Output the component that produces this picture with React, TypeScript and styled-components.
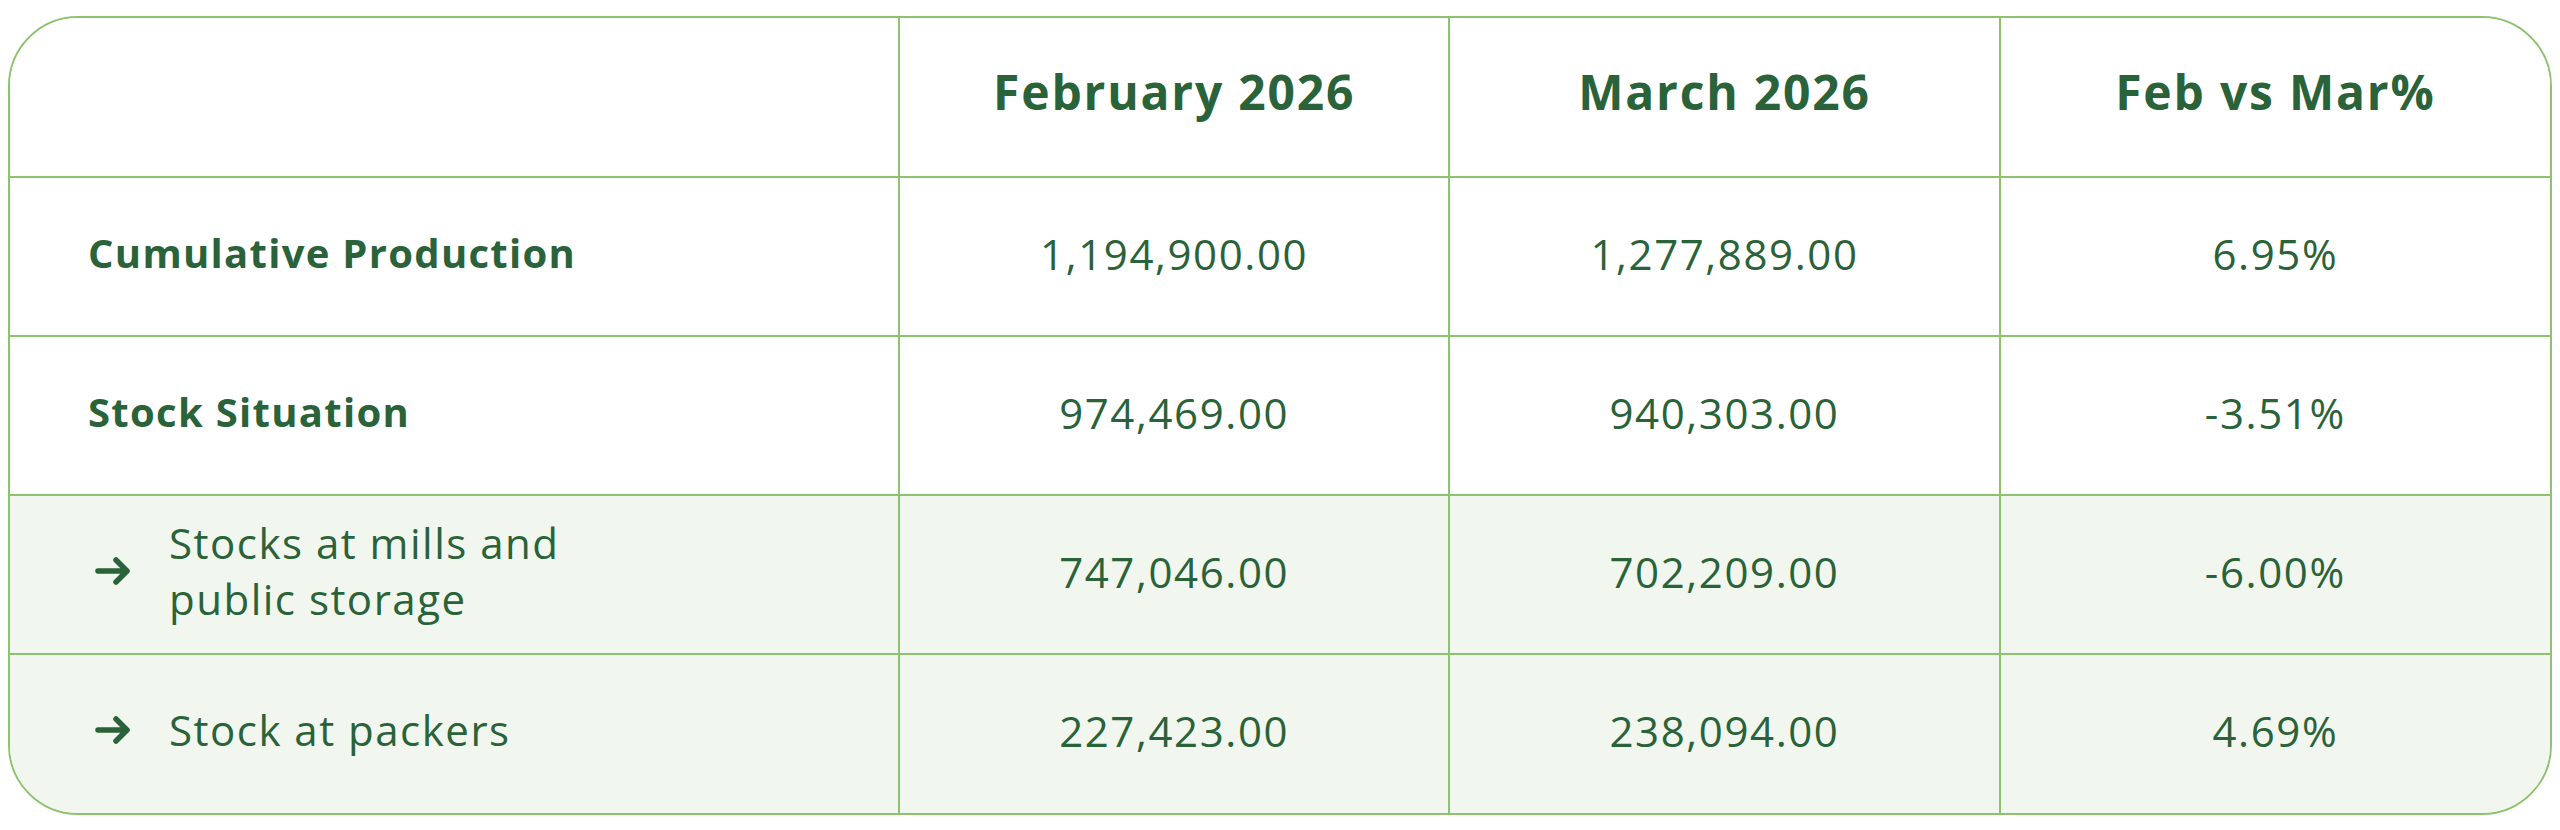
import React from 'react';
import styled, { createGlobalStyle } from 'styled-components';

const GlobalStyle = createGlobalStyle`
    body {
        margin: 0;
        background: #fff;
        font-family: 'Open Sans', 'Noto Sans', sans-serif;
    }
`;

const Page = styled.div`
    padding: 16px 8px 0 8px;
`;

const Frame = styled.div`
    border: 2px solid #8dc26f;
    border-radius: 70px;
    overflow: hidden;
`;

const Table = styled.table`
    width: 100%;
    border-collapse: collapse;
    table-layout: fixed;
    color: #2a6239;
`;

const Row = styled.tr<{ $tinted?: boolean; $last?: boolean }>`
    height: 159px;
    background: ${(p) => (p.$tinted ? '#f1f6ee' : '#fff')};
    border-bottom: ${(p) => (p.$last ? 'none' : '2px solid #8dc26f')};
`;

const HeadCell = styled.th`
    padding-bottom: 12px;
    font-size: 48px;
    font-weight: 700;
    letter-spacing: 1.8px;
    text-align: center;
    border-left: 2px solid #8dc26f;
    &:first-child {
        border-left: none;
    }
`;

const LabelCell = styled.td`
    padding: 0 0 8px 78px;
    font-size: 40px;
    font-weight: 700;
    letter-spacing: 1.3px;
`;

const SubLabelCell = styled.td`
    padding: 0 0 8px 84px;
    font-size: 42px;
    font-weight: 400;
    letter-spacing: 1.5px;
`;

const SubLabel = styled.div`
    display: flex;
    align-items: center;
    gap: 37px;
    line-height: 56px;
`;

const Arrow = styled.svg`
    flex: none;
    width: 38px;
    height: 32px;
`;

const ValueCell = styled.td`
    padding-bottom: 8px;
    font-size: 42px;
    font-weight: 400;
    text-align: center;
    letter-spacing: 1.6px;
    border-left: 2px solid #8dc26f;
`;

type Line = {
    label: string[];
    sub?: boolean;
    values: string[];
};

const lines: Line[] = [
    { label: ['Cumulative Production'], values: ['1,194,900.00', '1,277,889.00', '6.95%'] },
    { label: ['Stock Situation'], values: ['974,469.00', '940,303.00', '-3.51%'] },
    { label: ['Stocks at mills and', 'public storage'], sub: true, values: ['747,046.00', '702,209.00', '-6.00%'] },
    { label: ['Stock at packers'], sub: true, values: ['227,423.00', '238,094.00', '4.69%'] },
];

const ArrowIcon = () => (
    <Arrow viewBox="0 0 38 32" fill="none" stroke="currentColor" strokeWidth={5.5} strokeLinecap="round" strokeLinejoin="round">
        <path d="M4 16h29M22 5l11 11-11 11" />
    </Arrow>
);

const App: React.FC = () => (
    <Page>
        <GlobalStyle />
        <Frame>
            <Table>
                <colgroup>
                    <col style={{ width: 889 }} />
                    <col />
                    <col />
                    <col />
                </colgroup>
                <thead>
                    <Row>
                        <HeadCell />
                        <HeadCell>February 2026</HeadCell>
                        <HeadCell>March 2026</HeadCell>
                        <HeadCell>Feb vs Mar%</HeadCell>
                    </Row>
                </thead>
                <tbody>
                    {lines.map((line, i) => (
                        <Row key={line.label.join(' ')} $tinted={line.sub} $last={i === lines.length - 1}>
                            {line.sub ? (
                                <SubLabelCell>
                                    <SubLabel>
                                        <ArrowIcon />
                                        <div>
                                            {line.label.map((part) => (
                                                <div key={part}>{part}</div>
                                            ))}
                                        </div>
                                    </SubLabel>
                                </SubLabelCell>
                            ) : (
                                <LabelCell>{line.label[0]}</LabelCell>
                            )}
                            {line.values.map((v) => (
                                <ValueCell key={v}>{v}</ValueCell>
                            ))}
                        </Row>
                    ))}
                </tbody>
            </Table>
        </Frame>
    </Page>
);

export default App;
